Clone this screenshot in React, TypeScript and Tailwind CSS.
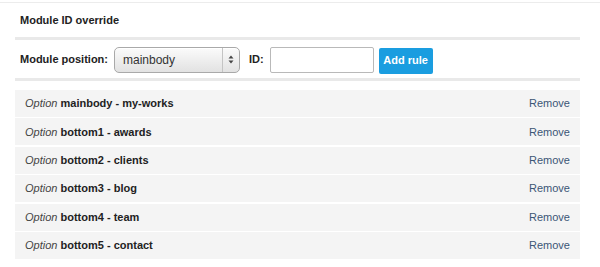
import React from 'react';

const rules = [
  { pos: 'mainbody', id: 'my-works' },
  { pos: 'bottom1', id: 'awards' },
  { pos: 'bottom2', id: 'clients' },
  { pos: 'bottom3', id: 'blog' },
  { pos: 'bottom4', id: 'team' },
  { pos: 'bottom5', id: 'contact' },
];

function SelectBox() {
  return (
    <div className="flex h-[26px] w-[126px] items-stretch rounded-[5px] border border-[#a9a9a9] bg-gradient-to-b from-[#fbfbfb] to-[#e2e2e2] shadow-[inset_0_1px_0_#fff]">
      <div className="flex flex-1 items-center pl-[8px] text-[12px] text-[#333]">mainbody</div>
      <div className="flex w-[17px] items-center justify-center border-l border-[#c4c4c4]">
        <svg width="6" height="9" viewBox="0 0 6 9">
          <path d="M3 0.5 L5.5 3.5 L0.5 3.5 Z" fill="#444" />
          <path d="M3 8.5 L5.5 5.5 L0.5 5.5 Z" fill="#444" />
        </svg>
      </div>
    </div>
  );
}

export default function App() {
  return (
    <div className="h-[267px] w-[600px] bg-white font-['Liberation_Sans',Arial,sans-serif] text-[11px] text-[#333]">
      <div className="h-[3px] border-b border-[#ececec]" />
      <div className="ml-[15px] mr-[20px]">
        <div className="flex h-[34px] items-center pl-[5px] pt-[1px] font-bold text-[#222]">
          Module ID override
        </div>
        <div className="h-[3px] bg-[#e9e9e9]" />
        <div className="flex h-[38px] items-center pl-[5px] pt-[1px]">
          <span className="mr-[6px] font-bold text-[#222]">Module position:</span>
          <SelectBox />
          <span className="ml-[9px] mr-[6px] font-bold text-[#222]">ID:</span>
          <input
            className="h-[26px] w-[104px] rounded-[2px] border border-[#b9b9b9] bg-white px-1 text-[12px] outline-none"
            defaultValue=""
          />
          <button className="ml-[5px] mt-[2px] h-[26px] w-[54px] rounded-[2px] bg-[#1a9de0] text-[11px] font-bold text-white">
            Add rule
          </button>
        </div>
        <div className="h-[3px] bg-[#e9e9e9]" />
        <div className="flex flex-col gap-[1.4px] pt-[9px]">
          {rules.map((r) => (
            <div
              key={r.pos}
              className="flex h-[27px] items-center justify-between bg-[#f4f4f4] pl-[10px] pr-[10px]"
            >
              <span>
                <i className="text-[#444]">Option</i>{' '}
                <b className="text-[#222]">
                  {r.pos} - {r.id}
                </b>
              </span>
              <span className="text-[#3b5676]">Remove</span>
            </div>
          ))}
        </div>
      </div>
    </div>
  );
}
